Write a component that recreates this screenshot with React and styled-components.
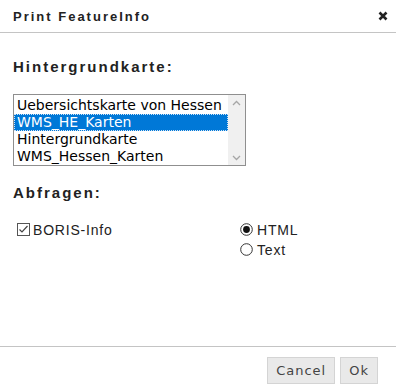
import React from 'react'
import styled, { createGlobalStyle } from 'styled-components'

const GlobalStyle = createGlobalStyle`
  body {
    margin: 0;
    background: #fff;
    font-family: "Liberation Sans", Arial, sans-serif;
  }
`

const Dialog = styled.div`
  width: 396px;
  height: 391px;
  display: flex;
  flex-direction: column;
  background: #fff;
  color: #222;
`

const Header = styled.div`
  height: 32px;
  padding: 0 8px 0 13px;
  display: flex;
  align-items: center;
  justify-content: space-between;
  border-bottom: 1px solid #c4c4c4;
`

const Title = styled.div`
  font-size: 13px;
  font-weight: bold;
  letter-spacing: 2px;
  color: #222;
`

const Close = styled.button`
  border: 0;
  background: none;
  padding: 0;
  width: 10px;
  height: 10px;
  display: flex;
  cursor: pointer;
`

const Body = styled.div`
  flex: 1;
  padding: 0 13px;
`

const Heading = styled.div`
  font-size: 15px;
  line-height: 17px;
  font-weight: bold;
  letter-spacing: 2px;
  color: #222;
  margin-top: ${props => props.top}px;
`

const ListBox = styled.div`
  margin-top: 19px;
  width: 233px;
  height: 72px;
  box-sizing: border-box;
  border: 1px solid #8f8f8f;
  display: flex;
`

const Options = styled.div`
  flex: 1;
  padding-top: 2px;
`

const Option = styled.div`
  height: 17px;
  line-height: 17px;
  padding-left: 3px;
  font-family: "DejaVu Sans", Verdana, sans-serif;
  font-size: 14px;
  white-space: nowrap;
  color: ${props => (props.selected ? '#fff' : '#000')};
  background: ${props => (props.selected ? '#0078d7' : 'transparent')};
  outline: ${props => (props.selected ? '1px dotted #cfe3f7' : 'none')};
  outline-offset: -1px;
`

const Scrollbar = styled.div`
  width: 17px;
  background: #f0f0f0;
  display: flex;
  flex-direction: column;
  justify-content: space-between;
  align-items: center;
  padding: 5px 0 4px;
  box-sizing: border-box;
`

const Choices = styled.div`
  margin-top: 20px;
  padding-left: 4px;
  display: grid;
  grid-template-columns: 223px auto;
`

const Choice = styled.label`
  display: flex;
  align-items: center;
  gap: ${props => props.gap}px;
  height: 17px;
  margin-bottom: 3px;
  font-size: 14px;
  letter-spacing: 0.8px;
  color: #222;
`

const Footer = styled.div`
  height: 45px;
  box-sizing: border-box;
  border-top: 1px solid #c4c4c4;
  padding: 10px 18px 0 0;
  display: flex;
  justify-content: flex-end;
  align-items: flex-start;
  gap: 5px;
`

const Button = styled.button`
  height: 27px;
  padding: 0 ${props => (props.narrow ? 8 : 8)}px;
  border: 1px solid #d4d4d4;
  background: #e9e9e9;
  color: #444;
  font-family: "DejaVu Sans", Verdana, sans-serif;
  font-size: 13px;
  letter-spacing: 1px;
  cursor: pointer;
`

const Chevron = ({ up }) => (
  <svg width="9" height="6" viewBox="0 0 9 6">
    <path d={up ? 'M1 5 L4.5 1.5 L8 5' : 'M1 1 L4.5 4.5 L8 1'} fill="none" stroke="#a6a6a6" strokeWidth="1.3" />
  </svg>
)

const CheckBox = () => (
  <svg width="13" height="13" viewBox="0 0 13 13">
    <rect x="0.5" y="0.5" width="12" height="12" fill="#fff" stroke="#555" />
    <path d="M2.5 6.5 L5 9 L10.5 3" fill="none" stroke="#444" strokeWidth="1.2" />
  </svg>
)

const Radio = ({ checked }) => (
  <svg width="13" height="13" viewBox="0 0 13 13">
    <circle cx="6.5" cy="6.5" r="5.8" fill="#fff" stroke="#333" strokeWidth="1" />
    {checked && <circle cx="6.5" cy="6.5" r="3.4" fill="#111" />}
  </svg>
)

const layers = ['Uebersichtskarte von Hessen', 'WMS_HE_Karten', 'Hintergrundkarte', 'WMS_Hessen_Karten']

export default function App() {
  return (
    <Dialog>
      <GlobalStyle />
      <Header>
        <Title>Print FeatureInfo</Title>
        <Close aria-label="close">
          <svg width="10" height="10" viewBox="0 0 10 10">
            <path d="M1.5 1.5 L8.5 8.5 M8.5 1.5 L1.5 8.5" stroke="#222" strokeWidth="2.6" />
          </svg>
        </Close>
      </Header>
      <Body>
        <Heading top={25}>Hintergrundkarte:</Heading>
        <ListBox>
          <Options>
            {layers.map((l, i) => (
              <Option key={l} selected={i === 1}>{l}</Option>
            ))}
          </Options>
          <Scrollbar>
            <Chevron up />
            <Chevron />
          </Scrollbar>
        </ListBox>
        <Heading top={18}>Abfragen:</Heading>
        <Choices>
          <div>
            <Choice gap={3}><CheckBox />BORIS-Info</Choice>
          </div>
          <div>
            <Choice gap={4}><Radio checked />HTML</Choice>
            <Choice gap={4}><Radio />Text</Choice>
          </div>
        </Choices>
      </Body>
      <Footer>
        <Button>Cancel</Button>
        <Button narrow>Ok</Button>
      </Footer>
    </Dialog>
  )
}
